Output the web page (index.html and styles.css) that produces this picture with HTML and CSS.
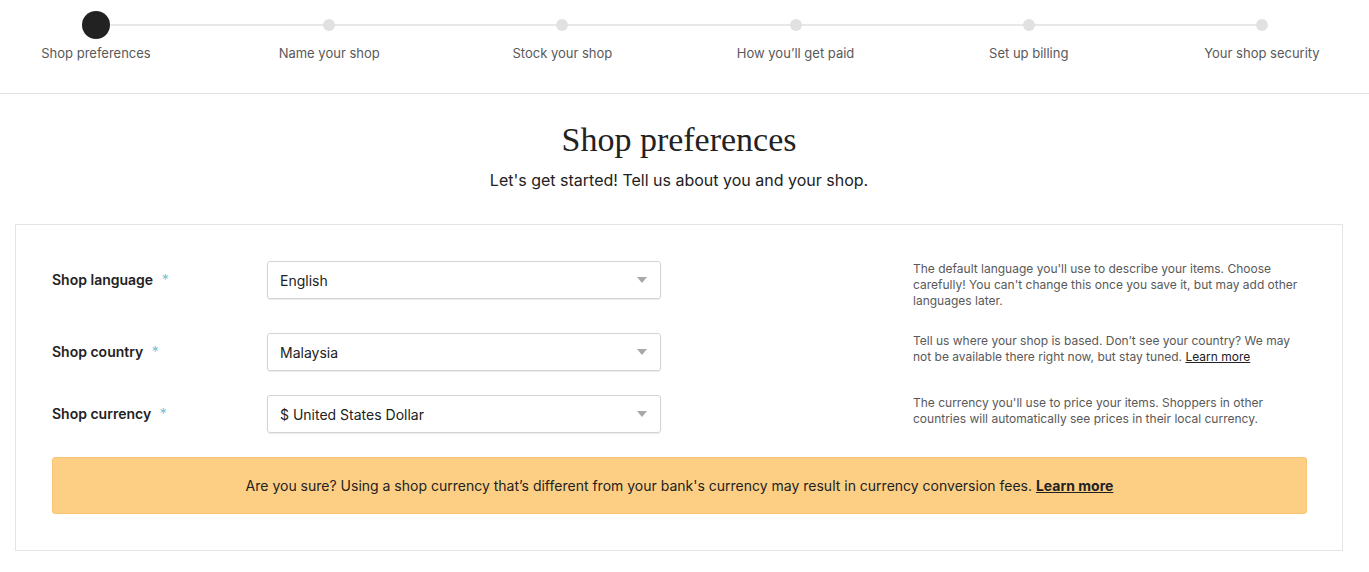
FILE: index.html
```html
<!DOCTYPE html>
<html lang="en">
<head>
<meta charset="utf-8">
<title>Shop preferences</title>
<link rel="stylesheet" href="styles.css">
</head>
<body>
<header class="progress">
  <ol class="stepper">
    <li class="step current"><span class="dot-slot"><span class="dot"></span></span><span class="step-label">Shop preferences</span></li>
    <li class="step"><span class="dot-slot"><span class="dot"></span></span><span class="step-label">Name your shop</span></li>
    <li class="step"><span class="dot-slot"><span class="dot"></span></span><span class="step-label">Stock your shop</span></li>
    <li class="step"><span class="dot-slot"><span class="dot"></span></span><span class="step-label">How you’ll get paid</span></li>
    <li class="step"><span class="dot-slot"><span class="dot"></span></span><span class="step-label">Set up billing</span></li>
    <li class="step"><span class="dot-slot"><span class="dot"></span></span><span class="step-label">Your shop security</span></li>
  </ol>
</header>
<main class="page">
  <h1 class="title">Shop preferences</h1>
  <p class="subtitle">Let's get started! Tell us about you and your shop.</p>
  <section class="card">
    <div class="row">
      <label class="field-label">Shop language <span class="req">*</span></label>
      <div class="select"><span>English</span><span class="caret"></span></div>
      <p class="help">The default language you'll use to describe your items. Choose carefully! You can't change this once you save it, but may add other languages later.</p>
    </div>
    <div class="row">
      <label class="field-label">Shop country <span class="req">*</span></label>
      <div class="select"><span>Malaysia</span><span class="caret"></span></div>
      <p class="help">Tell us where your shop is based. Don’t see your country? We may not be available there right now, but stay tuned. <a href="#" class="link">Learn more</a></p>
    </div>
    <div class="row">
      <label class="field-label">Shop currency <span class="req">*</span></label>
      <div class="select"><span>$ United States Dollar</span><span class="caret"></span></div>
      <p class="help">The currency you'll use to price your items. Shoppers in other countries will automatically see prices in their local currency.</p>
    </div>
    <div class="warning">Are you sure? Using a shop currency that’s different from your bank's currency may result in currency conversion fees. <a href="#" class="warning-link">Learn more</a></div>
  </section>
</main>
</body>
</html>
```
FILE: styles.css
```css
* { box-sizing: border-box; }
body {
  margin: 0;
  background: #fff;
  color: #222;
  font-family: Inter, "Noto Sans", Arial, sans-serif;
}
.progress {
  height: 94px;
  border-bottom: 1px solid #e1e1e1;
  padding: 0 27px 0 16px;
}
.stepper {
  list-style: none;
  margin: 0;
  padding: 0;
  display: flex;
  justify-content: space-between;
  position: relative;
}
.stepper::before {
  content: "";
  position: absolute;
  left: 80px;
  right: 80px;
  top: 24px;
  height: 2px;
  background: #e8e8e8;
}
.step {
  width: 160px;
  display: flex;
  flex-direction: column;
  align-items: center;
  position: relative;
}
.dot-slot {
  margin-top: 11px;
  height: 28px;
  display: flex;
  align-items: center;
  justify-content: center;
}
.dot {
  width: 12px;
  height: 12px;
  border-radius: 50%;
  background: #e1e1e1;
}
.current .dot {
  width: 28px;
  height: 28px;
  background: #222;
}
.step-label {
  margin-top: 5px;
  font-size: 13px;
  line-height: 18px;
  color: #595959;
  white-space: nowrap;
}
.page {
  padding: 0 26px 0 15px;
}
.title {
  margin: 26px 0 0;
  text-align: center;
  font-family: "Liberation Serif", "DejaVu Serif", serif;
  font-weight: normal;
  font-size: 34px;
  line-height: 40px;
  color: #222;
}
.subtitle {
  margin: 8px 0 0;
  text-align: center;
  font-size: 16px;
  line-height: 24px;
  color: #222;
}
.card {
  margin-top: 32px;
  border: 1px solid #e4e4e4;
  box-shadow: 0 1px 0 #cfcfcf;
  padding: 36px 35px 36px 36px;
  display: flex;
  flex-direction: column;
  gap: 24px;
}
.row {
  display: grid;
  grid-template-columns: 215px 394px 1fr;
  align-items: start;
}
.field-label {
  font-size: 14px;
  font-weight: 600;
  line-height: 38px;
  color: #222;
}
.req {
  color: #6cc6d9;
  font-weight: normal;
  margin-left: 5px;
}
.select {
  height: 38px;
  border: 1px solid #d4d4d4;
  border-radius: 3px;
  box-shadow: 0 1px 1px rgba(0,0,0,0.08);
  display: flex;
  align-items: center;
  justify-content: space-between;
  padding: 0 13px 0 12px;
  font-size: 14px;
  color: #222;
}
.caret {
  width: 0;
  height: 0;
  border-left: 5px solid transparent;
  border-right: 5px solid transparent;
  border-top: 6px solid #a8a8a8;
}
.help {
  justify-self: end;
  width: 394px;
  margin: 0;
  font-size: 12px;
  line-height: 16px;
  color: #595959;
}
.link {
  color: #222;
  text-decoration: underline;
}
.warning {
  background: #fdcf85;
  border: 1px solid #f6c676;
  border-radius: 3px;
  min-height: 57px;
  display: flex;
  align-items: center;
  justify-content: center;
  font-size: 14px;
  color: #222;
  white-space: pre-wrap;
}
.warning-link {
  color: #222;
  font-weight: 700;
  text-decoration: underline;
}
```
